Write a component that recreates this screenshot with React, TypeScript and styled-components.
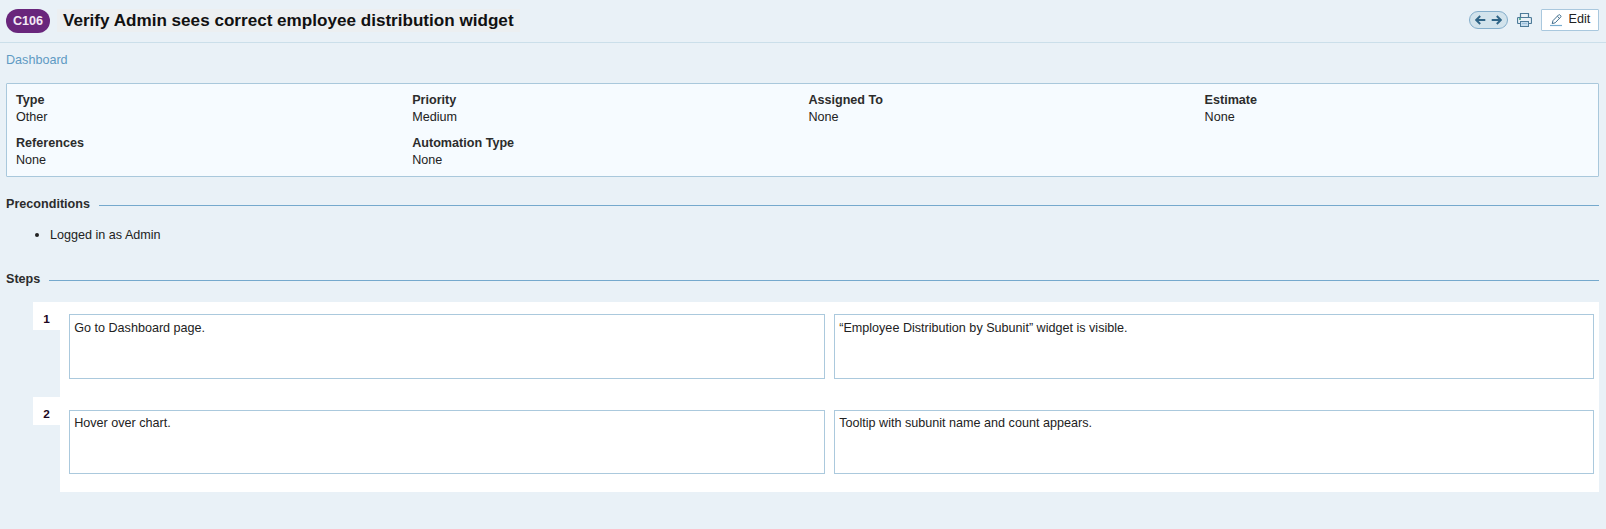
import React from "react";
import styled, { createGlobalStyle } from "styled-components";

const Global = createGlobalStyle`
  *, *::before, *::after { box-sizing: border-box; }
  html { background: #e9f1f7; }
  body { margin: 0; background: #e9f1f7; color: #222; font: 12.6px/17px "Liberation Sans", Arial, sans-serif; }
`;

const Page = styled.main`
  min-height: 529px;
`;

const Header = styled.header`
  display: flex;
  align-items: flex-start;
  height: 43px;
  padding: 9px 7px 0 6px;
  border-bottom: 1px solid #cbdfea;
`;

const CaseBadge = styled.span`
  width: 44px;
  height: 24px;
  border-radius: 12px;
  background: #69267c;
  color: #f3eaf5;
  font-size: 12.6px;
  font-weight: bold;
  line-height: 24px;
  text-align: center;
`;

const Title = styled.h1`
  margin: 0 0 0 7px;
  padding: 0 6px;
  height: 23px;
  background: #eceff1;
  color: #111;
  font-size: 17.1px;
  line-height: 23px;
  white-space: nowrap;
`;

const Toolbar = styled.div`
  display: flex;
  align-items: flex-start;
  margin-left: auto;
`;

const Pager = styled.div`
  display: flex;
  align-items: center;
  justify-content: space-between;
  width: 39px;
  height: 18px;
  margin: 2px 9px 0 0;
  padding: 0 5px;
  border: 1px solid #84aecb;
  border-radius: 9px;
  background: #d2e3ec;
`;

const PrintIcon = styled.svg`
  margin: 4px 9px 0 0;
`;

const EditButton = styled.button`
  display: flex;
  width: 58px;
  height: 22px;
  padding: 0 0 0 8px;
  border: 1px solid #a9c8de;
  border-radius: 1px;
  background: #fff;
  color: #222;
  font: 12.6px/18px "Liberation Sans", Arial, sans-serif;
  gap: 5.5px;
`;

const PencilIcon = styled.svg`
  flex: none;
  margin-top: 4px;
`;

const Breadcrumb = styled.nav`
  padding: 9px 6px 0;
  height: 40px;
`;

const SectionLink = styled.a`
  color: #5f9ac3;
  text-decoration: none;
`;

const Details = styled.dl`
  display: grid;
  grid-template-columns: repeat(4, 396.2px);
  align-content: start;
  row-gap: 9px;
  height: 94px;
  margin: 0 7px 0 6px;
  padding: 8px 0 0 9px;
  border: 1px solid #a9c8dc;
  border-radius: 1px;
  background: #f6fbff;
`;

const DetailLabel = styled.dt`
  color: #2c2c2c;
  font-weight: bold;
`;

const DetailValue = styled.dd`
  margin: 0;
`;

const SectionTitle = styled.h2<{ $top: number }>`
  display: flex;
  gap: 9px;
  margin: ${(p) => p.$top}px 7px 0 6px;
  color: #2c2c2c;
  font-size: 12.6px;
  line-height: 17px;

  &::after {
    content: "";
    flex: 1;
    height: 1px;
    margin-top: 9px;
    background: #75a9cd;
  }
`;

const Preconditions = styled.ul`
  margin: 13px 0 0;
  padding: 0 0 0 50px;
  height: 17px;
`;

const Precondition = styled.li`
  &::marker {
    font-size: 14px;
  }
`;

const StepList = styled.div`
  margin: 14px 7px 0 33px;
`;

const StepRow = styled.section`
  display: flex;
  align-items: flex-start;
  height: 95px;
`;

const StepNumber = styled.div`
  width: 27px;
  height: 28px;
  background: #fff;
  color: #1c0721;
  font-size: 11.8px;
  font-weight: bold;
  line-height: 34px;
  text-align: center;
`;

const StepBody = styled.div<{ $inset: number }>`
  display: grid;
  grid-template-columns: 756px 760px;
  column-gap: 9px;
  flex: 1;
  height: 95px;
  padding: ${(p) => p.$inset}px 0 18px 9px;
  background: #fff;
`;

const StepText = styled.div<{ $inset: number }>`
  padding: ${(p) => p.$inset}px 4.2px 0;
  border: 1px solid #abc9dd;
`;

const details = [
  ["Type", "Other"],
  ["Priority", "Medium"],
  ["Assigned To", "None"],
  ["Estimate", "None"],
  ["References", "None"],
  ["Automation Type", "None"],
];

const steps = [
  { action: "Go to Dashboard page.", expected: "“Employee Distribution by Subunit” widget is visible.", inset: 12 },
  { action: "Hover over chart.", expected: "Tooltip with subunit name and count appears.", inset: 13 },
];

const Arrow = ({ back = false }: { back?: boolean }) => (
  <svg width="11" height="10" viewBox="0 0 11 10" fill="none" stroke="#2f6486" strokeWidth="1.9">
    <path d={back ? "M10.3 5H1.5M5.2 1L1.2 5L5.2 9" : "M0.7 5H9.5M5.8 1L9.8 5L5.8 9"} />
  </svg>
);

export default function App() {
  return (
    <Page>
      <Global />
      <Header>
        <CaseBadge>C106</CaseBadge>
        <Title>Verify Admin sees correct employee distribution widget</Title>
        <Toolbar>
          <Pager>
            <Arrow back />
            <Arrow />
          </Pager>
          <PrintIcon width="15" height="14" viewBox="0 0 15 14" fill="none" stroke="#4d7b99">
            <path strokeWidth="1.2" d="M3.5 4.5V.5h8v4M3.5 10.5h-2a1 1 0 0 1-1-1v-4a1 1 0 0 1 1-1h12a1 1 0 0 1 1 1v4a1 1 0 0 1-1 1h-2" />
            <rect x="3.5" y="8.5" width="8" height="5" fill="#c5dced" />
            <path d="M5 10.5h5" stroke="#9dc0dc" />
            <path d="M2 6h2" stroke="#33a17c" strokeWidth="1.4" />
          </PrintIcon>
          <EditButton>
            <PencilIcon width="13" height="13" viewBox="0 0 13 13" fill="none" stroke="#426f8e">
              <path d="M2.2 9.6L3 6.6L8.6 .9Q9.3.4 10 1L10.8 1.8Q11.3 2.5 10.7 3.1L5.2 8.8ZM7.4 2.3l2.1 2.1" />
              <path d="M0 11.5h12" stroke="#79adcf" strokeWidth="1.2" />
            </PencilIcon>
            Edit
          </EditButton>
        </Toolbar>
      </Header>
      <Breadcrumb>
        <SectionLink>Dashboard</SectionLink>
      </Breadcrumb>
      <Details>
        {details.map(([label, value]) => (
          <div key={label}>
            <DetailLabel>{label}</DetailLabel>
            <DetailValue>{value}</DetailValue>
          </div>
        ))}
      </Details>
      <SectionTitle $top={19}>Preconditions</SectionTitle>
      <Preconditions>
        <Precondition>Logged in as Admin</Precondition>
      </Preconditions>
      <SectionTitle $top={28}>Steps</SectionTitle>
      <StepList>
        {steps.map((step, index) => (
          <StepRow key={step.action}>
            <StepNumber>{index + 1}</StepNumber>
            <StepBody $inset={step.inset}>
              <StepText $inset={17 - step.inset}>{step.action}</StepText>
              <StepText $inset={17 - step.inset}>{step.expected}</StepText>
            </StepBody>
          </StepRow>
        ))}
      </StepList>
    </Page>
  );
}
